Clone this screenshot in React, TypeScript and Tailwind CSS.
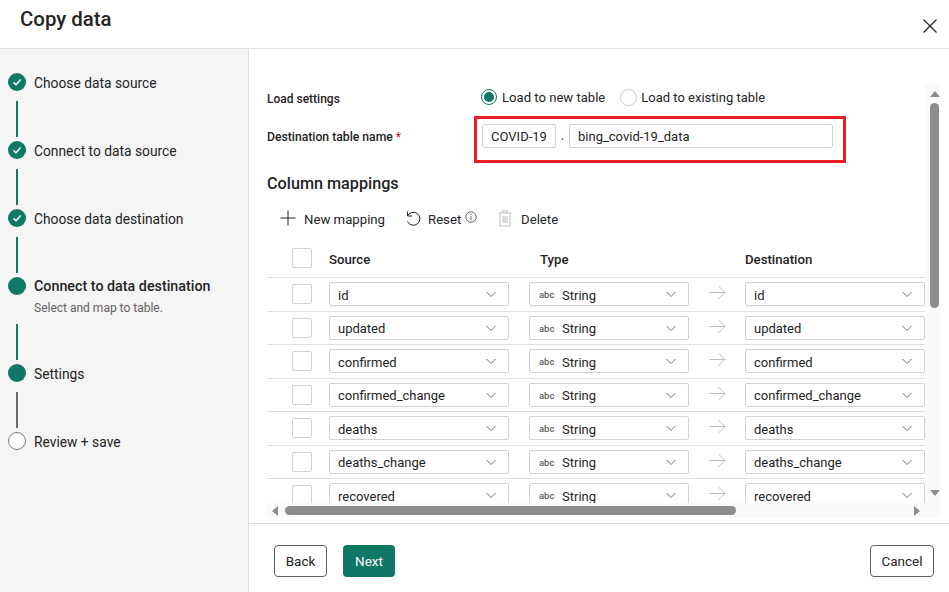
import React from "react";

const font = { fontFamily: 'Roboto, "Noto Sans", sans-serif' };

function Chevron() {
  return (
    <svg width="12" height="12" viewBox="0 0 12 12" className="shrink-0" fill="none" stroke="#707070" strokeWidth="1">
      <path d="M1.5 4 L6 8.5 L10.5 4" />
    </svg>
  );
}

function Select({ w, children }: { w: string; children: React.ReactNode }) {
  return (
    <div className={`${w} h-[24px] shrink-0 flex items-center justify-between pl-[8px] pr-[11px] bg-white border border-[#d1d1d1] rounded-[2px] text-[13px] text-[#242424]`}>
      <div className="flex items-center min-w-0 whitespace-nowrap pt-[2px]">{children}</div>
      <Chevron />
    </div>
  );
}

function Box() {
  return <div className="w-[20px] h-[20px] shrink-0 bg-white border border-[#d1d1d1] rounded-[2px]" />;
}

function Row({ name }: { name: string }) {
  return (
    <div className="h-[33.5px] shrink-0 flex items-center pl-[25px] border-b border-[#e0e0e0]">
      <Box />
      <div className="w-[17px] shrink-0" />
      <Select w="w-[180px]">{name}</Select>
      <div className="w-[20px] shrink-0" />
      <Select w="w-[160px]">
        <span className="w-[23px] ml-[1px] text-[9.5px] font-medium text-[#616161]">abc</span>
        String
      </Select>
      <div className="w-[56px] shrink-0 flex justify-center -mt-[3px]">
        <svg width="17" height="15" viewBox="0 0 17 15" fill="none" stroke="#bdbdbd" strokeWidth="1">
          <path d="M0.5 7.5 H16 M9.5 1 L16 7.5 L9.5 14" />
        </svg>
      </div>
      <Select w="w-[180px]">{name}</Select>
    </div>
  );
}

function Done() {
  return (
    <svg width="18" height="18" viewBox="0 0 18 18" className="shrink-0">
      <circle cx="9" cy="9" r="9" fill="#117865" />
      <path d="M5.5 9.4 L8 11.7 L12.6 6.6" fill="none" stroke="#fff" strokeWidth="1.5" />
    </svg>
  );
}

function Filled() {
  return <div className="w-[18px] h-[18px] shrink-0 rounded-full bg-[#117865]" />;
}

function Line({ gray }: { gray?: boolean }) {
  return <div className={`ml-[16px] w-[2px] h-[36px] mt-[10px] mb-[4px] ${gray ? "bg-[#6b6b6b]" : "bg-[#117865]"}`} />;
}

function Step({ icon, label, bold }: { icon: React.ReactNode; label: string; bold?: boolean }) {
  return (
    <div className="h-[18px] flex items-center gap-[8px] pl-[8px]">
      {icon}
      <span className={`whitespace-nowrap text-[#242424] pt-[2px] ${bold ? "text-[14.3px] font-medium" : "text-[13.8px]"}`}>{label}</span>
    </div>
  );
}

const names = ["id", "updated", "confirmed", "confirmed_change", "deaths", "deaths_change", "recovered"];

export default function App() {
  return (
    <div className="w-[949px] h-[592px] bg-white flex flex-col overflow-hidden text-[#242424]" style={font}>
      <header className="h-[49px] shrink-0 border-b border-[#e0e0e0] flex items-center justify-between pl-[20px] pr-[12px] pb-[9px]">
        <h1 className="text-[20.4px] font-medium text-[#242424]">Copy data</h1>
        <svg width="14" height="14" viewBox="0 0 14 14" fill="none" stroke="#242424" strokeWidth="1.2" className="mt-[12px]">
          <path d="M0.5 0.5 L13.5 13.5 M13.5 0.5 L0.5 13.5" />
        </svg>
      </header>
      <div className="flex flex-1 min-h-0">
        <aside className="w-[249px] shrink-0 bg-[#f5f5f5] border-r border-[#e0e0e0] pt-[24px]">
          <Step icon={<Done />} label="Choose data source" />
          <Line />
          <Step icon={<Done />} label="Connect to data source" />
          <Line />
          <Step icon={<Done />} label="Choose data destination" />
          <Line />
          <Step icon={<Filled />} label="Connect to data destination" bold />
          <div className="h-[19px] pl-[34px] pt-[5px] text-[12px] leading-[16px] text-[#616161] whitespace-nowrap">Select and map to table.</div>
          <Line />
          <Step icon={<Filled />} label="Settings" />
          <Line gray />
          <Step icon={<div className="w-[18px] h-[18px] shrink-0 rounded-full border border-[#7a7a7a] bg-white" />} label="Review + save" />
        </aside>
        <main className="flex-1 min-w-0 flex flex-col">
          <div className="h-[474px] shrink-0 pl-[18px] pr-[9px] pt-[35px] pb-[5px] flex flex-col">
            <div className="flex-1 min-h-0 flex">
              <div className="w-[658px] shrink-0 flex flex-col overflow-hidden">
                <div className="h-[26px] shrink-0 flex items-center">
                  <div className="w-[214px] shrink-0 text-[12px] font-medium pt-[3px]">Load settings</div>
                  <div className="flex items-center gap-[5px]">
                    <div className="w-[16px] h-[16px] rounded-full border border-[#117865] flex items-center justify-center">
                      <div className="w-[10px] h-[10px] rounded-full bg-[#117865]" />
                    </div>
                    <span className="text-[13.1px] whitespace-nowrap pt-[2px]">Load to new table</span>
                  </div>
                  <div className="flex items-center gap-[4px] ml-[15px]">
                    <div className="w-[17px] h-[17px] rounded-full border border-[#c7c7c7]" />
                    <span className="text-[13px] whitespace-nowrap pt-[2px]">Load to existing table</span>
                  </div>
                </div>
                <div className="h-[47px] shrink-0 mt-[6px] flex items-center">
                  <div className="w-[207px] shrink-0 text-[12.2px] font-medium whitespace-nowrap pb-[4px]">
                    Destination table name <span className="text-[#c50f1f] font-normal">*</span>
                  </div>
                  <div className="w-[372px] shrink-0 h-[47px] border-[3px] border-[#ec1c24] flex items-start pt-[5px] pl-[5px]">
                    <div className="w-[74px] h-[24px] shrink-0 border border-[#d1d1d1] rounded-[2px] flex items-center justify-center text-[13px] pt-[1px]">COVID-19</div>
                    <div className="w-[13px] shrink-0 text-center text-[13px] leading-[24px]">.</div>
                    <div className="w-[264px] h-[24px] shrink-0 border border-[#d1d1d1] rounded-[2px] flex items-center pl-[8px] text-[13px] pt-[1px]">bing_covid-19_data</div>
                  </div>
                </div>
                <h2 className="h-[22px] shrink-0 mt-[10px] text-[16.2px] leading-[22px] font-medium">Column mappings</h2>
                <div className="h-[24px] shrink-0 mt-[11px] flex items-center pl-[13px] text-[13.2px]">
                  <svg width="16" height="16" viewBox="0 0 16 16" fill="none" stroke="#242424" strokeWidth="1" className="shrink-0">
                    <path d="M8 0.5 V15.5 M0.5 8 H15.5" />
                  </svg>
                  <span className="ml-[8px] w-[80px] shrink-0 whitespace-nowrap pt-[4px]">New mapping</span>
                  <svg width="17" height="17" viewBox="0 0 17 17" fill="none" stroke="#242424" strokeWidth="1" className="shrink-0 ml-[21px]">
                    <path d="M2.5 1.5 V6 H7 M2.5 6 A6.5 6.5 0 1 1 2.5 11.5" />
                  </svg>
                  <span className="ml-[6px] w-[32px] shrink-0 whitespace-nowrap pt-[4px]">Reset</span>
                  <svg width="12" height="12" viewBox="0 0 12 12" fill="none" stroke="#424242" strokeWidth="0.8" className="shrink-0 ml-[5px] -mt-[2px]">
                    <circle cx="6" cy="6" r="5.2" />
                    <path d="M6 5 V9 M6 3 V3.9" />
                  </svg>
                  <svg width="14" height="17" viewBox="0 0 14 17" fill="none" stroke="#bdbdbd" strokeWidth="1" className="shrink-0 ml-[21px]">
                    <path d="M0.5 3 H13.5 M4.5 3 V1 H9.5 V3 M2 3 V16 H12 V3 M5 6 V13 M7 6 V13 M9 6 V13" />
                  </svg>
                  <span className="ml-[9px] whitespace-nowrap pt-[4px]">Delete</span>
                </div>
                <div className="h-[33px] shrink-0 mt-[15px] flex items-center pl-[25px] border-b border-[#e0e0e0] text-[13.2px] font-medium">
                  <div className="-mt-[5px] flex items-center">
                    <Box />
                    <span className="ml-[17px] w-[211px] shrink-0 pt-[2px]">Source</span>
                    <span className="w-[205px] shrink-0 pt-[2px]">Type</span>
                    <span className="pt-[2px]">Destination</span>
                  </div>
                </div>
                {names.map((n) => (
                  <Row key={n} name={n} />
                ))}
              </div>
              <div className="w-[15px] shrink-0 flex flex-col items-center bg-[#fafafa] pl-[4px]">
                <svg width="10" height="6" viewBox="0 0 10 6" fill="#8c8c8c" className="mt-[7px]"><path d="M5 0 L10 6 H0 Z" /></svg>
                <div className="w-[9px] h-[205px] mt-[6px] rounded-full bg-[#8c8c8c]" />
                <div className="flex-1" />
                <svg width="10" height="6" viewBox="0 0 10 6" fill="#8c8c8c" className="mb-[7px]"><path d="M5 6 L10 0 H0 Z" /></svg>
              </div>
            </div>
            <div className="h-[15px] w-[673px] shrink-0 bg-[#fafafa] flex items-center pl-[5px]">
              <svg width="6" height="10" viewBox="0 0 6 10" fill="#8c8c8c" className="shrink-0"><path d="M0 5 L6 0 V10 Z" /></svg>
              <div className="w-[451px] h-[9px] ml-[7px] rounded-full bg-[#8c8c8c] shrink-0" />
              <svg width="6" height="10" viewBox="0 0 6 10" fill="#8c8c8c" className="shrink-0 ml-[178px]"><path d="M6 5 L0 0 V10 Z" /></svg>
            </div>
          </div>
          <footer className="flex-1 border-t border-[#e0e0e0] flex items-start pt-[21px] pl-[25px] pr-[15px] text-[13.5px]">
            <button className="w-[53px] h-[32px] border border-[#616161] rounded-[4px] bg-white">Back</button>
            <button className="w-[52px] h-[32px] ml-[16px] rounded-[4px] bg-[#117865] text-white">Next</button>
            <button className="w-[64px] h-[32px] ml-auto border border-[#616161] rounded-[4px] bg-white">Cancel</button>
          </footer>
        </main>
      </div>
    </div>
  );
}
